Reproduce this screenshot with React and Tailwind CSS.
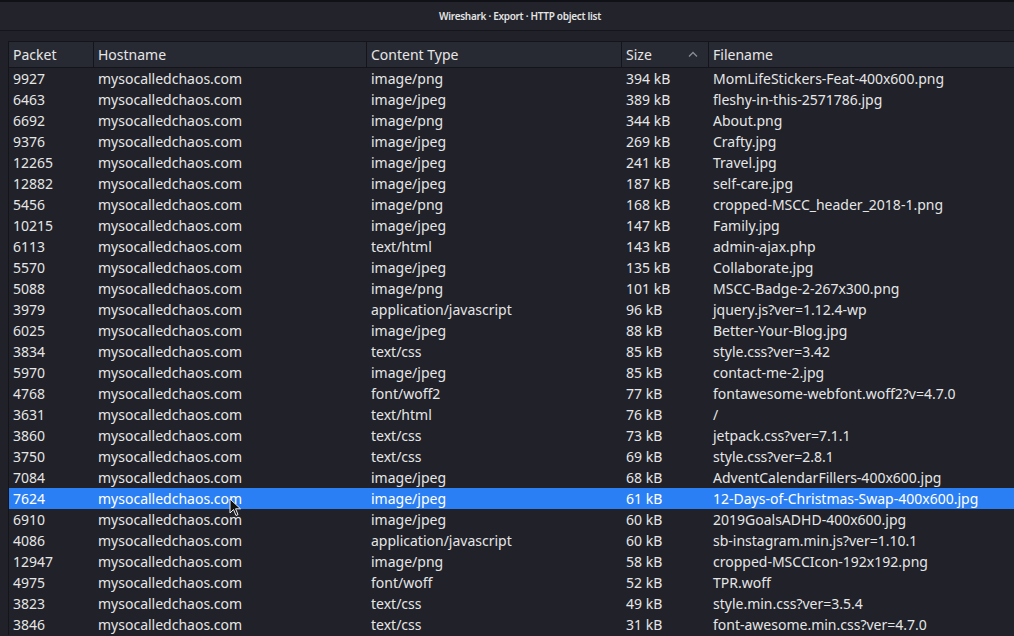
import React from 'react';

const rows = [
  ['9927', 'image/png', '394 kB', 'MomLifeStickers-Feat-400x600.png'],
  ['6463', 'image/jpeg', '389 kB', 'fleshy-in-this-2571786.jpg'],
  ['6692', 'image/png', '344 kB', 'About.png'],
  ['9376', 'image/jpeg', '269 kB', 'Crafty.jpg'],
  ['12265', 'image/jpeg', '241 kB', 'Travel.jpg'],
  ['12882', 'image/jpeg', '187 kB', 'self-care.jpg'],
  ['5456', 'image/png', '168 kB', 'cropped-MSCC_header_2018-1.png'],
  ['10215', 'image/jpeg', '147 kB', 'Family.jpg'],
  ['6113', 'text/html', '143 kB', 'admin-ajax.php'],
  ['5570', 'image/jpeg', '135 kB', 'Collaborate.jpg'],
  ['5088', 'image/png', '101 kB', 'MSCC-Badge-2-267x300.png'],
  ['3979', 'application/javascript', '96 kB', 'jquery.js?ver=1.12.4-wp'],
  ['6025', 'image/jpeg', '88 kB', 'Better-Your-Blog.jpg'],
  ['3834', 'text/css', '85 kB', 'style.css?ver=3.42'],
  ['5970', 'image/jpeg', '85 kB', 'contact-me-2.jpg'],
  ['4768', 'font/woff2', '77 kB', 'fontawesome-webfont.woff2?v=4.7.0'],
  ['3631', 'text/html', '76 kB', '/'],
  ['3860', 'text/css', '73 kB', 'jetpack.css?ver=7.1.1'],
  ['3750', 'text/css', '69 kB', 'style.css?ver=2.8.1'],
  ['7084', 'image/jpeg', '68 kB', 'AdventCalendarFillers-400x600.jpg'],
  ['7624', 'image/jpeg', '61 kB', '12-Days-of-Christmas-Swap-400x600.jpg'],
  ['6910', 'image/jpeg', '60 kB', '2019GoalsADHD-400x600.jpg'],
  ['4086', 'application/javascript', '60 kB', 'sb-instagram.min.js?ver=1.10.1'],
  ['12947', 'image/png', '58 kB', 'cropped-MSCCIcon-192x192.png'],
  ['4975', 'font/woff', '52 kB', 'TPR.woff'],
  ['3823', 'text/css', '49 kB', 'style.min.css?ver=3.5.4'],
  ['3846', 'text/css', '31 kB', 'font-awesome.min.css?ver=4.7.0'],
];

const cols = 'grid grid-cols-[85px_273px_255px_87px_1fr]';

function Cursor() {
  return (
    <svg className="absolute left-[229px] top-[498px]" width="14" height="20" viewBox="0 0 14 20">
      <path d="M1 1 L1 15 L4.5 11.5 L7 17.5 L9 16.6 L6.6 10.8 L11.5 10.8 Z" fill="#111" stroke="#eee" strokeWidth="1" />
    </svg>
  );
}

export default function App() {
  return (
    <div className="relative w-[1014px] h-[636px] overflow-hidden bg-[#202129] text-[#e6e6e6] font-['Noto_Sans',sans-serif]">
      {/* Title bar */}
      <div className="h-[31px] border-t-2 border-[#101116] border-b border-b-[#15161b] bg-[#22232b] flex items-center justify-center">
        <span className="text-[10px] font-semibold tracking-[-0.3px] text-[#e4e4e4] ml-[26px]">
          Wireshark · Export · HTTP object list
        </span>
      </div>

      {/* Table */}
      <div className="ml-[8px] mt-[10px] border-l border-[#14151a]">
        <div className={`${cols} h-[27px] bg-[#282a33] border-t border-b border-[#14151a] text-[14px]`}>
          <div className="pl-[4px] flex items-center border-r border-[#14151a]">Packet</div>
          <div className="pl-[4px] flex items-center border-r border-[#14151a]">Hostname</div>
          <div className="pl-[4px] flex items-center border-r border-[#14151a]">Content Type</div>
          <div className="pl-[4px] pr-[10px] flex items-center justify-between border-r border-[#14151a]">
            <span>Size</span>
            <svg width="10" height="6" viewBox="0 0 10 6" className="mb-[2px]">
              <path d="M1 5.5 L5 1.5 L9 5.5" fill="none" stroke="#8a8c94" strokeWidth="1.3" />
            </svg>
          </div>
          <div className="pl-[4px] flex items-center">Filename</div>
        </div>
        {rows.map((r, i) => (
          <div
            key={i}
            className={`${cols} h-[21px] text-[14px] leading-[21px] ${i === 20 ? 'bg-[#2b7ff4] text-white' : ''}`}
          >
            <div className="pl-[4px] whitespace-nowrap">{r[0]}</div>
            <div className="pl-[4px] whitespace-nowrap">mysocalledchaos.com</div>
            <div className="pl-[4px] whitespace-nowrap">{r[1]}</div>
            <div className="pl-[4px] whitespace-nowrap">{r[2]}</div>
            <div className="pl-[4px] whitespace-nowrap">{r[3]}</div>
          </div>
        ))}
      </div>
      <Cursor />
    </div>
  );
}
